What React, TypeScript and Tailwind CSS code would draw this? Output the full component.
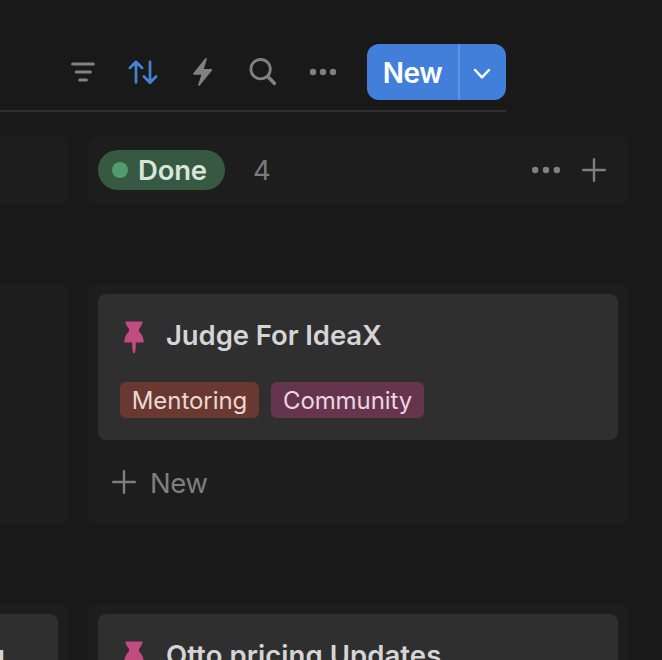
import React from "react";

function Plus() {
  return (
    <svg width="24" height="24" viewBox="0 0 24 24" fill="none" stroke="#7f7f7f" strokeWidth="2.4" strokeLinecap="round" className="shrink-0">
      <path d="M12 1.2v21.6M1.2 12h21.6" />
    </svg>
  );
}

function Dots({ gap, className = "" }: { gap: number; className?: string }) {
  return (
    <svg width="30" height="8" viewBox="0 0 30 8" fill="#818181" className={`shrink-0 ${className}`}>
      <circle cx={15 - gap} cy="4" r="3.2" />
      <circle cx="15" cy="4" r="3.2" />
      <circle cx={15 + gap} cy="4" r="3.2" />
    </svg>
  );
}

function Pin() {
  return (
    <svg width="20" height="33" viewBox="0 0 20 33" fill="#c14c7f" className="mt-[27px] shrink-0">
      <path d="M2 .4H18Q18.8 .4 18.5 1.2C17.9 3.9 16.8 5.9 15.1 7.4V10.6C17.3 12.4 19.2 15.8 19.8 20.2Q19.9 21.4 18.8 21.4H11.8V27L10.9 31.8Q10 33.4 9.1 31.8L8.2 27V21.4H1.2Q.1 21.4 .2 20.2C.8 15.8 2.7 12.4 4.9 10.6V7.4C3.2 5.9 2.1 3.9 1.5 1.2Q1.2 .4 2 .4Z" />
    </svg>
  );
}

function Toolbar() {
  return (
    <header className="flex h-28 w-[506px] shrink-0 items-start border-b-2 border-[#2f2f2f] pt-11">
      <div className="flex h-14 items-center">
        <svg width="24" height="20" viewBox="0 0 24 20" fill="none" stroke="#818181" strokeWidth="3" strokeLinecap="round" className="ml-[71px]">
          <path d="M1.6 2h20.8M5.2 10h14.2M8.6 18h6.8" />
        </svg>
        <svg width="30" height="26" viewBox="0 0 30 26" fill="none" stroke="#4682d3" strokeWidth="2.7" strokeLinecap="round" strokeLinejoin="round" className="ml-[33px]">
          <path d="M8 23.5V2.8M1.9 9L8 2.8L14.1 9M22 2.8V23.5M15.9 17.5L22 23.7L28.1 17.5" />
        </svg>
        <svg width="20" height="28" viewBox="0 0 20 28" fill="#818181" className="ml-[35px]">
          <path d="M12.2 .6C13 -.4 14.1 .2 13.7 1.4L10.8 11H18.2Q19.8 11.2 18.8 12.7L6.9 27.2C6 28.3 4.8 27.7 5.2 26.4L8.4 16.7H1Q-.4 16.3 .5 14.9Z" />
        </svg>
        <svg width="28" height="28" viewBox="0 0 28 28" fill="none" stroke="#818181" strokeLinecap="round" className="ml-[36px]">
          <circle cx="11.6" cy="11.2" r="9.7" strokeWidth="2.8" />
          <path d="M18.7 18.5L25.3 25.3" strokeWidth="3.7" />
        </svg>
        <Dots gap={10} className="ml-[31px]" />
      </div>
      <div className="ml-[29px] flex h-14 w-[139px] overflow-hidden rounded-[12px] bg-[#427fdb]">
        <button className="flex w-[91px] items-center justify-center pt-px text-[28px] font-semibold leading-none tracking-[-0.5px] text-white">New</button>
        <button aria-label="New options" className="flex flex-1 items-center justify-center border-l-2 border-[#5f95e3] pr-[2px]">
          <svg width="18" height="12" viewBox="0 0 18 12" fill="none" stroke="white" strokeWidth="2.5" strokeLinecap="round" strokeLinejoin="round" className="mt-1">
            <path d="M2 2l7 7.3L16 2" />
          </svg>
        </button>
      </div>
    </header>
  );
}

function Tag({ label, className }: { label: string; className: string }) {
  return <span className={`flex h-9 items-center justify-center rounded-[6px] pt-[2px] text-[24px] leading-none ${className}`}>{label}</span>;
}

function Card({ title, titleClass, children }: { title: string; titleClass: string; children?: React.ReactNode }) {
  return (
    <article className="h-[146px] rounded-[8px] bg-[#2f2f2f] pl-[22px]">
      <div className="flex h-[88px] items-start pl-1">
        <Pin />
        <h2 className={`ml-[22px] mt-[24px] whitespace-nowrap font-semibold leading-[35px] text-[#d5d5d5] ${titleClass}`}>{title}</h2>
      </div>
      <div className="flex gap-3">{children}</div>
    </article>
  );
}

export default function App() {
  return (
    <main className="flex h-[660px] w-[662px] flex-col overflow-hidden bg-[#191919] font-['Inter','Liberation_Sans',sans-serif]">
      <Toolbar />
      <section className="mt-6 flex h-[68px] shrink-0 gap-5">
        <div className="w-[68px] rounded-r-[8px] bg-[#1d1d1d]" />
        <div className="flex w-[540px] items-center rounded-[8px] bg-[#1d1d1d] pl-[10px] pr-[22px]">
          <div className="flex h-10 w-[127px] items-center rounded-full bg-[#375942] pl-[14px] text-[27.5px] font-semibold leading-none text-[#d8e5da]">
            <span className="mr-[10px] size-4 shrink-0 rounded-full bg-[#4f9d6e]" />
            <span className="pt-px tracking-[-0.2px]">Done</span>
          </div>
          <span className="ml-7 pt-px text-[27.5px] leading-none text-[#7b7b7b]">4</span>
          <div className="ml-auto flex items-center gap-[21px]">
            <Dots gap={10.8} />
            <Plus />
          </div>
        </div>
      </section>
      <section className="mt-20 flex h-60 shrink-0 gap-5">
        <div className="w-[68px] rounded-r-[8px] bg-[#1d1d1d]" />
        <div className="w-[540px] rounded-[8px] bg-[#1d1d1d] p-[10px]">
          <Card title="Judge For IdeaX" titleClass="text-[27.5px] tracking-[-0.09px]">
            <Tag label="Mentoring" className="w-[139px] bg-[#683831] tracking-[-0.05px] text-[#ecd8d1]" />
            <Tag label="Community" className="w-[153px] bg-[#65344d] tracking-[-0.1px] text-[#ecd5e1]" />
          </Card>
          <button className="flex h-[84px] items-center gap-[14px] pl-[14px] text-[27.5px] leading-none text-[#7f7f7f]">
            <Plus />
            <span className="mt-[4px] tracking-[-0.4px]">New</span>
          </button>
        </div>
      </section>
      <section className="mt-20 flex h-60 shrink-0 gap-5">
        <div className="w-[68px] overflow-hidden rounded-r-[8px] bg-[#1d1d1d] pt-[10px]">
          <div className="flex h-[146px] w-[58px] rounded-r-[8px] bg-[#2f2f2f]">
            <div className="flex w-[5px] justify-end pt-[24px] text-[27.5px] font-semibold leading-[35px] text-[#d5d5d5]">g</div>
          </div>
        </div>
        <div className="w-[540px] rounded-[8px] bg-[#1d1d1d] p-[10px]">
          <Card title="Otto pricing Updates" titleClass="text-[27.5px] tracking-[0.07px]" />
        </div>
      </section>
    </main>
  );
}
